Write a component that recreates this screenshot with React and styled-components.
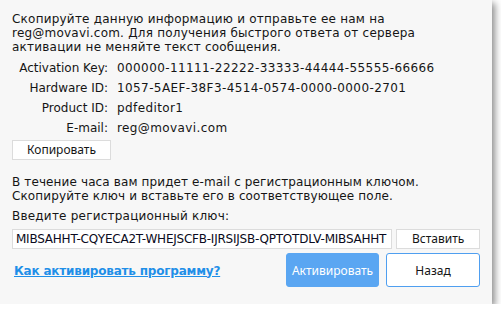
import React from "react";
import styled, { createGlobalStyle } from "styled-components";

const Global = createGlobalStyle`
  html, body {
    margin: 0;
    padding: 0;
    background: #ffffff;
  }
  body {
    font-family: "DejaVu Sans", Verdana, sans-serif;
  }
`;

const Dialog = styled.div`
  width: 492px;
  height: 304px;
  box-sizing: border-box;
  background: #f7f7f7;
  box-shadow: 3px 3px 7px rgba(0, 0, 0, 0.45);
  padding: 12px 12px 0 12px;
  color: #151515;
  font-size: 12px;
  display: flex;
  flex-direction: column;
`;

const Para = styled.p`
  margin: 0;
  line-height: 14px;
  letter-spacing: ${(p) => p.$ls ?? 0.22}px;
  white-space: nowrap;
  margin-top: ${(p) => p.$mt || 0}px;
  margin-bottom: ${(p) => p.$mb || 0}px;
`;

const InfoGrid = styled.div`
  display: grid;
  grid-template-columns: 96px auto;
  column-gap: 9px;
  row-gap: 6px;
  line-height: 14px;
  margin-bottom: 5px;
`;

const Label = styled.span`
  text-align: right;
  white-space: nowrap;
`;

const Value = styled.span`
  white-space: nowrap;
  letter-spacing: 0.4px;
`;

const PlainButton = styled.button`
  font-family: "Noto Sans", "Open Sans", sans-serif;
  font-size: 12px;
  color: #151515;
  background: #ffffff;
  border: 1px solid #dcdcdc;
  border-radius: 0;
  height: 20px;
  width: ${(p) => p.$w}px;
  padding: 0;
  line-height: 18px;
`;

const KeyRow = styled.div`
  display: flex;
  gap: 4px;
  margin-top: 6px;
`;

const KeyInput = styled.div`
  width: 382px;
  height: 20px;
  box-sizing: border-box;
  background: #ffffff;
  border: 1px solid #dcdcdc;
  padding: 0 3px;
  line-height: 18px;
  letter-spacing: -0.23px;
  white-space: nowrap;
  overflow: hidden;
  color: #0a0a20;
`;

const Footer = styled.div`
  display: flex;
  align-items: center;
  margin-top: 4px;
`;

const HelpLink = styled.a`
  color: #1f8fe8;
  font-weight: bold;
  letter-spacing: -0.2px;
  text-decoration: underline;
  margin-left: 2px;
  margin-top: 1px;
  flex: 1;
`;

const BigButton = styled.button`
  font-family: "Noto Sans", "Open Sans", sans-serif;
  font-size: 12px;
  padding: 0;
  width: ${(p) => p.$w}px;
  height: 34px;
  border-radius: 3px;
  margin-left: ${(p) => p.$ml || 0}px;
  border: 1px solid ${(p) => (p.$primary ? "#5aa6f2" : "#4f9ff0")};
  background: ${(p) => (p.$primary ? "#5aa6f2" : "#ffffff")};
  color: ${(p) => (p.$primary ? "#ffffff" : "#151515")};
`;

export default function App() {
  return (
    <>
      <Global />
      <Dialog>
        <Para $mb={7}>
          Скопируйте данную информацию и отправьте ее нам на
          <br />
          reg@movavi.com. Для получения быстрого ответа от сервера
          <br />
          активации не меняйте текст сообщения.
        </Para>
        <InfoGrid>
          <Label>Activation Key:</Label>
          <Value>000000-11111-22222-33333-44444-55555-66666</Value>
          <Label>Hardware ID:</Label>
          <Value>1057-5AEF-38F3-4514-0574-0000-0000-2701</Value>
          <Label>Product ID:</Label>
          <Value>pdfeditor1</Value>
          <Label>E-mail:</Label>
          <Value>reg@movavi.com</Value>
        </InfoGrid>
        <PlainButton $w={99}>Копировать</PlainButton>
        <Para $mt={15} $mb={6} $ls={0.12}>
          В течение часа вам придет e-mail с регистрационным ключом.
          <br />
          Скопируйте ключ и вставьте его в соответствующее поле.
        </Para>
        <Para>Введите регистрационный ключ:</Para>
        <KeyRow>
          <KeyInput>MIBSAHHT-CQYECA2T-WHEJSCFB-IJRSIJSB-QPTOTDLV-MIBSAHHT</KeyInput>
          <PlainButton $w={84}>Вставить</PlainButton>
        </KeyRow>
        <Footer>
          <HelpLink href="#">Как активировать программу?</HelpLink>
          <BigButton $primary $w={93}>Активировать</BigButton>
          <BigButton $w={94} $ml={7}>Назад</BigButton>
        </Footer>
      </Dialog>
    </>
  );
}
